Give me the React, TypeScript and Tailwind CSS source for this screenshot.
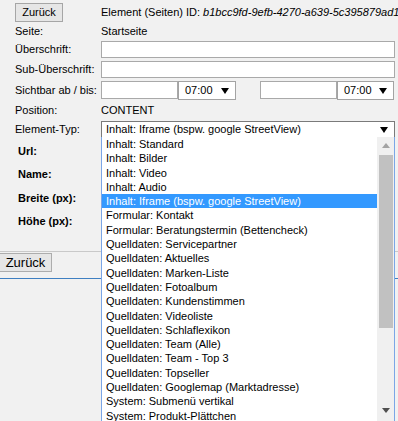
import type { ReactNode } from 'react';

const options = [
  'Inhalt: Standard',
  'Inhalt: Bilder',
  'Inhalt: Video',
  'Inhalt: Audio',
  'Inhalt: Iframe (bspw. google StreetView)',
  'Formular: Kontakt',
  'Formular: Beratungstermin (Bettencheck)',
  'Quelldaten: Servicepartner',
  'Quelldaten: Aktuelles',
  'Quelldaten: Marken-Liste',
  'Quelldaten: Fotoalbum',
  'Quelldaten: Kundenstimmen',
  'Quelldaten: Videoliste',
  'Quelldaten: Schlaflexikon',
  'Quelldaten: Team (Alle)',
  'Quelldaten: Team - Top 3',
  'Quelldaten: Topseller',
  'Quelldaten: Googlemap (Marktadresse)',
  'System: Submenü vertikal',
  'System: Produkt-Plättchen',
];

const selected = 'Inhalt: Iframe (bspw. google StreetView)';

function Caret({ className = 'fill-black' }: { className?: string }) {
  return (
    <svg width="8" height="6" viewBox="0 0 8 6" className={className}>
      <polygon points="0,0 8,0 4,6" />
    </svg>
  );
}

function Row({ label, children, className = '' }: { label: ReactNode; children?: ReactNode; className?: string }) {
  return (
    <div className={`grid grid-cols-[86px_1fr] ${className}`}>
      <div className="whitespace-nowrap">{label}</div>
      <div className="flex whitespace-nowrap">{children}</div>
    </div>
  );
}

function TimeSelect({ w }: { w: string }) {
  return (
    <div className={`${w} h-[19px] bg-white border border-[#a3a3a3] flex items-center justify-between pl-[6px] pr-[6px]`}>
      <span>07:00</span>
      <Caret />
    </div>
  );
}

export default function App() {
  return (
    <div className="relative w-[398px] h-[421px] overflow-hidden bg-[#f1f1f1] text-black text-[11px] font-['Liberation_Sans',Arial,sans-serif]">
      <div className="pl-[15px]">
        <Row label={<button className="mt-[3px] w-[48px] h-[19px] bg-[#e6e6e6] border border-[#a6a6a6] text-[11px] leading-[17px]">Zurück</button>} className="h-[22px]">
          <div className="pt-[6px] leading-[13px]">
            Element (Seiten) ID: <i>b1bcc9fd-9efb-4270-a639-5c395879ad1e</i>
          </div>
        </Row>

        <Row label={<div className="leading-[19px]">Seite:</div>} className="h-[19px]">
          <div className="leading-[19px]">Startseite</div>
        </Row>

        <Row label={<div className="leading-[17px]">Überschrift:</div>} className="h-[20px]">
          <input readOnly className="w-[294px] h-[17px] bg-white border border-[#a9a9a9] outline-none" />
        </Row>

        <Row label={<div className="leading-[17px]">Sub-Überschrift:</div>} className="h-[20px]">
          <input readOnly className="w-[294px] h-[17px] bg-white border border-[#a9a9a9] outline-none" />
        </Row>

        <Row label={<div className="leading-[18px]">Sichtbar ab / bis:</div>} className="h-[20px]">
          <input readOnly className="w-[77px] h-[18px] bg-white border border-[#a9a9a9] outline-none" />
          <TimeSelect w="w-[58px]" />
          <input readOnly className="ml-[24px] w-[77px] h-[18px] bg-white border border-[#a9a9a9] outline-none" />
          <TimeSelect w="w-[57px]" />
        </Row>

        <Row label={<div className="leading-[19px]">Position:</div>} className="h-[19px]">
          <div className="leading-[19px]">CONTENT</div>
        </Row>

        <Row label={<div className="mt-[1px] leading-[16px]">Element-Typ:</div>} className="h-[18px]">
          <div className="mt-[1px] w-[294px] h-[17px] bg-white border border-[#7a7a7a] flex items-center justify-between pl-[4px] pr-[6px]">
            <span>{selected}</span>
            <Caret />
          </div>
        </Row>

        <div className="pl-[3px] pt-[1px] font-bold">
          {['Url:', 'Name:', 'Breite (px):', 'Höhe (px):'].map((l) => (
            <div key={l} className="h-[23.5px] flex items-center">{l}</div>
          ))}
        </div>
      </div>

      <div className="mt-[18px] border-t border-[#c9c9c9]" />
      <button className="mt-[1px] w-[52px] h-[19px] bg-[#e6e6e6] border border-[#adadad] border-l-0 text-[13px] leading-[17px]">Zurück</button>
      <div className="mt-[6px] border-t border-[#3f7fc1]" />

      {/* open dropdown */}
      <div className="absolute left-[101px] top-[137px] w-[294px] h-[290px] bg-white border border-t-0 border-[#7ba6e6] flex overflow-hidden">
        <div className="flex-1">
          {options.map((o) => (
            <div
              key={o}
              className={`h-[14.3px] leading-[14.3px] pl-[4px] whitespace-nowrap ${o === selected ? 'bg-[#3399ff] text-white' : ''}`}
            >
              {o}
            </div>
          ))}
        </div>
        <div className="w-[17px] bg-[#f0f0f0] flex flex-col items-center">
          <div className="h-[17px] flex items-center justify-center">
            <svg width="8" height="5" viewBox="0 0 8 5" className="fill-[#a3a3a3]">
              <polygon points="4,0 8,5 0,5" />
            </svg>
          </div>
          <div className="mt-[1px] w-[14px] h-[173px] bg-[#c1c1c1]" />
          <div className="flex-1" />
          <div className="h-[17px] mb-[7px] flex items-center justify-center">
            <svg width="8" height="5" viewBox="0 0 8 5" className="fill-[#505050]">
              <polygon points="0,0 8,0 4,5" />
            </svg>
          </div>
        </div>
      </div>
    </div>
  );
}
